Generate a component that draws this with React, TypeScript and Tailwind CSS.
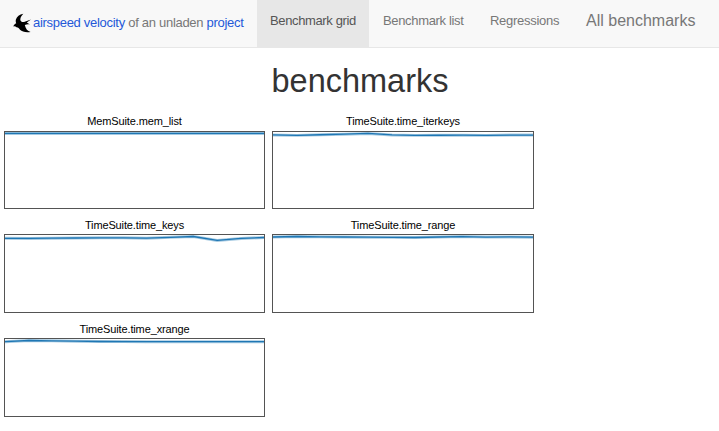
const charts = [
  { name: 'MemSuite.mem_list', points: '0,1.5 260,1.5', height: 'h-[78px]', label: 'h-[19px]' },
  { name: 'TimeSuite.time_iterkeys', points: '0,3 24,3.4 47,2.8 71,2.2 95,1.5 119,3 142,3.4 166,3.3 190,3.2 213,3.4 237,3.1 260,3.1', height: 'h-[78px]', label: 'h-[19px]' },
  { name: 'TimeSuite.time_keys', points: '0,3.3 24,3.4 47,3.2 71,3 95,2.8 119,2.8 142,3.2 166,2.3 189,1.5 213,5.4 237,3.4 260,2.5', height: 'h-[79px]', label: 'h-[18px]' },
  { name: 'TimeSuite.time_range', points: '0,2 24,1.5 47,1.8 71,2 95,2.2 119,2.3 142,2.5 166,2 189,1.6 213,2.1 237,1.9 260,2.2', height: 'h-[79px]', label: 'h-[18px]' },
  { name: 'TimeSuite.time_xrange', points: '0,2.7 24,1.5 47,1.8 71,2.2 95,2.5 119,2.6 142,2.7 260,2.7', height: 'h-[79px]', label: 'h-[18px]' },
];

function Swallow() {
  return (
    <svg className="h-5 w-5 shrink-0" viewBox="0 0 20 20" fill="#000">
      <path d="M10.3 0.7 C6.4 1.2 3.9 3.5 2.9 6.5 C2.4 8.4 3 9.6 3.2 10.2 C1.9 10.6 0.9 11.8 0.1 13.6 C1.3 13.1 2.5 13.3 3.5 14.2 C5.3 14.3 6 15.4 7 16.8 C9.2 19 13 19.6 17.6 19 C14.5 18 12.7 15.8 11.8 11.9 C14 11 15.5 11.2 17 11.4 L13.8 9.6 L18 6.4 L11 9 C9 9.5 7.2 8.2 7.3 6.2 C7.4 4 9 2.4 10.3 0.7Z" />
    </svg>
  );
}

type ChartProps = { name: string; points: string; height: string; label: string };

function Chart({ name, points, height, label }: ChartProps) {
  return (
    <div>
      <div className={`${label} text-center text-[11px] leading-[18px] tracking-[-0.13px] text-black`}>{name}</div>
      <div className={`${height} overflow-hidden border border-[#545454]`}>
        <svg className="h-full w-full" viewBox="0 0 260 77" preserveAspectRatio="none" fill="none">
          <polyline points={points} stroke="#1f77b4" strokeOpacity=".4" strokeWidth="3" />
          <polyline points={points} stroke="#1f77b4" strokeWidth="1.3" />
        </svg>
      </div>
    </div>
  );
}

export default function App() {
  return (
    <div className="h-[431px] w-[719px] overflow-hidden bg-white font-['Liberation_Sans',Arial,sans-serif]">
      <nav className="flex h-12 border-b border-[#e7e7e7] bg-[#f8f8f8] text-[13px] whitespace-nowrap text-[#777]">
        <div className="flex w-[257px] items-start pt-[13px] pl-[13px]">
          <Swallow />
          <span className="leading-5 tracking-[-0.29px]">
            <a className="text-[#2458d8]">airspeed velocity</a> of an unladen <a className="text-[#2458d8]">project</a>
          </span>
        </div>
        <a className="h-[47px] w-28 bg-[#e7e7e7] pt-[11px] pl-[13px] leading-5 tracking-[-0.37px] text-[#555]">Benchmark grid</a>
        <a className="w-[107px] pt-[11px] pl-[14px] leading-5 tracking-[-0.34px]">Benchmark list</a>
        <a className="w-[110px] pt-[11px] pl-[14px] leading-5 tracking-[-0.28px]">Regressions</a>
        <span className="pt-[11px] text-[16px] leading-5">All benchmarks</span>
      </nav>
      <h1 className="h-16 pt-[14px] pl-px text-center text-[32.5px] leading-[38px] text-[#333]">benchmarks</h1>
      <main className="grid grid-cols-[261px_262px] gap-[7px] pl-1">
        {charts.map((chart) => <Chart key={chart.name} {...chart} />)}
      </main>
    </div>
  );
}
